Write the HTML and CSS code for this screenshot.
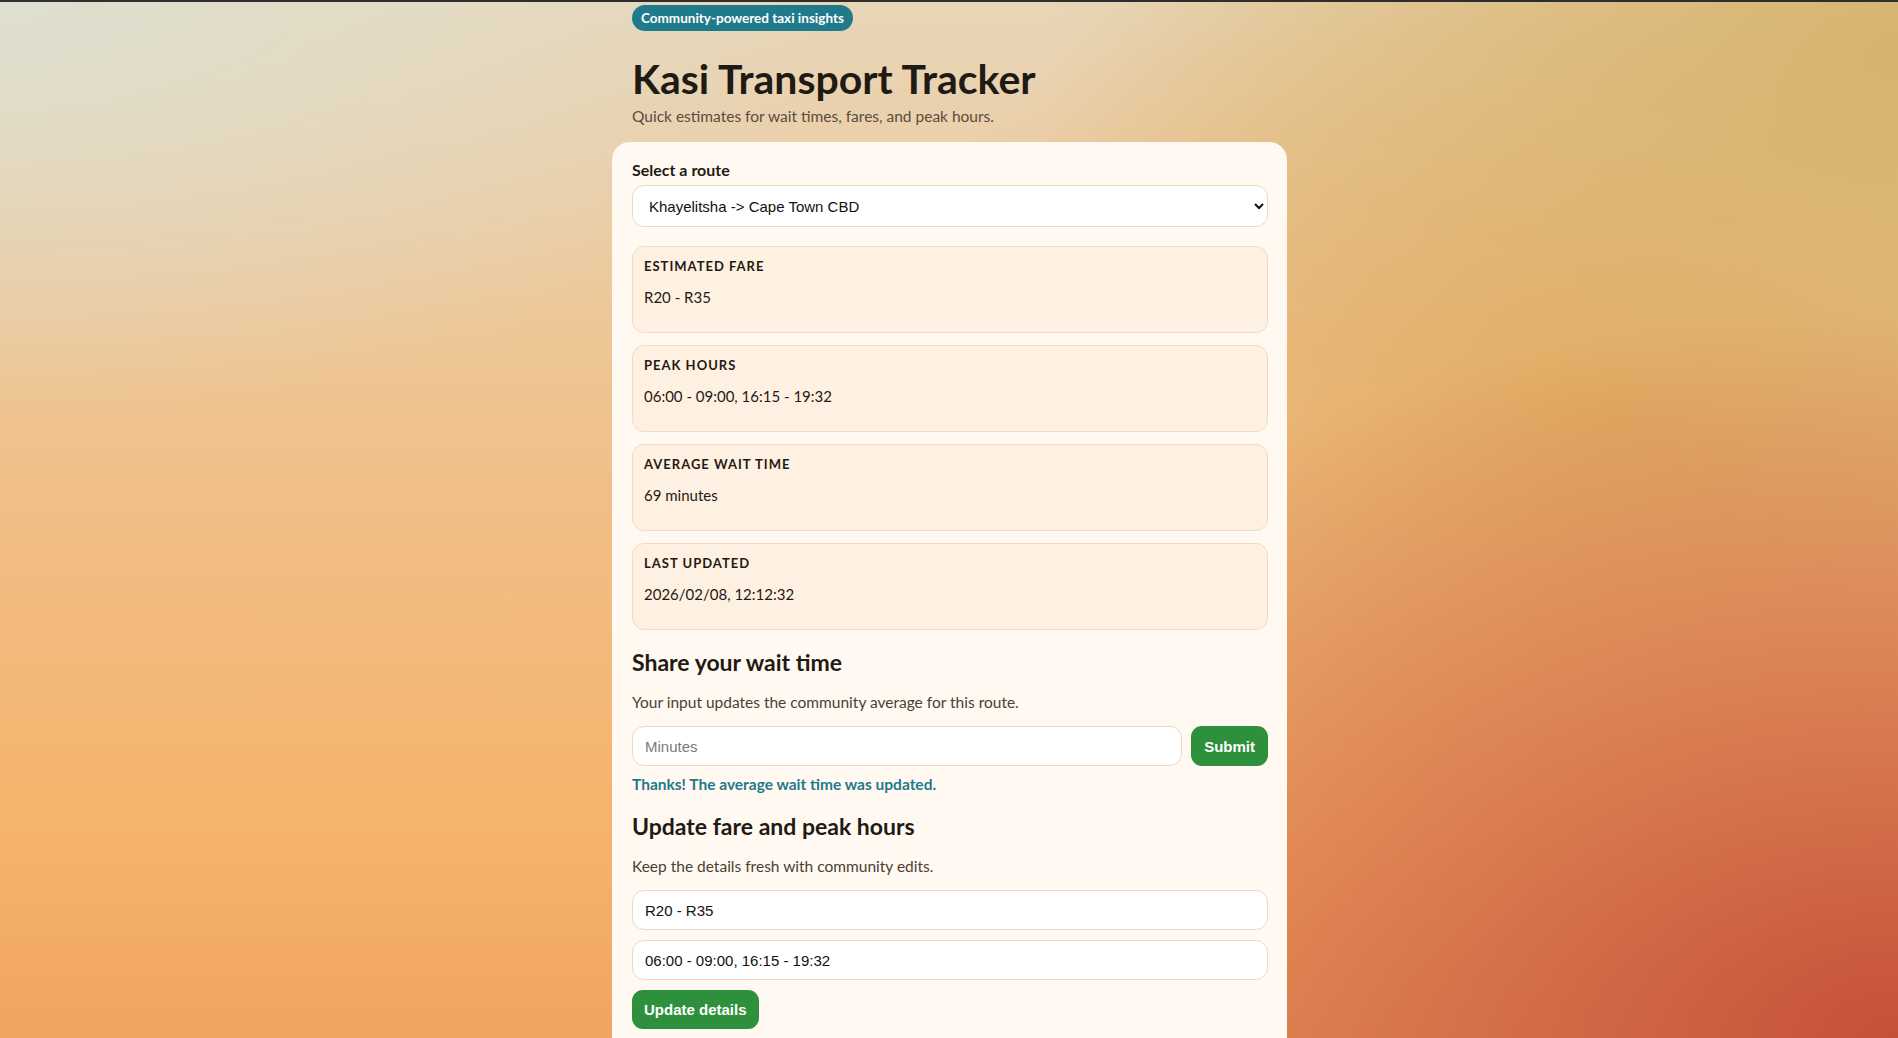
FILE: index.html
```html
<!DOCTYPE html>
<html lang="en">
<head>
<meta charset="utf-8">
<title>Kasi Transport Tracker</title>
<link rel="stylesheet" href="styles.css">
</head>
<body>
<div class="topline"></div>
<main class="page">
  <header class="hero">
    <span class="badge">Community-powered taxi insights</span>
    <h1 class="title">Kasi Transport Tracker</h1>
    <p class="subtitle">Quick estimates for wait times, fares, and peak hours.</p>
  </header>
  <section class="card">
    <label class="field-label" for="route">Select a route</label>
    <select id="route" class="select">
      <option>Khayelitsha -&gt; Cape Town CBD</option>
    </select>
    <div class="stats">
      <div class="stat">
        <h3 class="stat-label">Estimated fare</h3>
        <p class="stat-value">R20 - R35</p>
      </div>
      <div class="stat">
        <h3 class="stat-label">Peak hours</h3>
        <p class="stat-value">06:00 - 09:00, 16:15 - 19:32</p>
      </div>
      <div class="stat">
        <h3 class="stat-label">Average wait time</h3>
        <p class="stat-value">69 minutes</p>
      </div>
      <div class="stat">
        <h3 class="stat-label">Last updated</h3>
        <p class="stat-value">2026/02/08, 12:12:32</p>
      </div>
    </div>
    <h2 class="section-title">Share your wait time</h2>
    <p class="section-desc">Your input updates the community average for this route.</p>
    <div class="row">
      <input class="input grow" type="text" placeholder="Minutes">
      <button class="btn">Submit</button>
    </div>
    <p class="notice">Thanks! The average wait time was updated.</p>
    <h2 class="section-title">Update fare and peak hours</h2>
    <p class="section-desc">Keep the details fresh with community edits.</p>
    <div class="stack">
      <input class="input" type="text" value="R20 - R35">
      <input class="input" type="text" value="06:00 - 09:00, 16:15 - 19:32">
    </div>
    <button class="btn btn-update">Update details</button>
  </section>
</main>
</body>
</html>
```
FILE: styles.css
```css
* { box-sizing: border-box; }
html, body { height: 100%; }
body {
  margin: 0;
  font-family: "Trebuchet MS", Lato, "Noto Sans", sans-serif;
  color: #1f1a14;
  overflow: hidden;
  background:
    radial-gradient(ellipse 45% 40% at 0% 0%, rgba(222,224,210,0.95), rgba(222,224,210,0) 100%),
    radial-gradient(ellipse 60% 70% at 100% 100%, rgba(197,80,58,1), rgba(197,80,58,0) 100%),
    radial-gradient(ellipse 45% 55% at 100% 5%, rgba(214,178,106,0.95), rgba(214,178,106,0) 100%),
    radial-gradient(ellipse 40% 50% at 85% 40%, rgba(228,166,86,0.8), rgba(228,166,86,0) 100%),
    linear-gradient(180deg, #e8d6b8 0%, #f0c08a 45%, #f6b36b 80%, #f0a560 100%);
}
.topline { height: 2px; background: #2e2e2e; }
.page { width: 676px; margin: 0 auto; padding-left: 1px; }
.hero { padding: 3px 20px 0 20px; }
.badge {
  display: inline-block;
  background: #1f7a8c;
  color: #fff;
  font-size: 13.5px;
  font-weight: 700;
  line-height: 16px;
  padding: 5px 9px;
  border-radius: 999px;
}
.title {
  margin: 25px 0 0;
  font-size: 41px;
  line-height: 46px;
  font-weight: 700;
  color: #1f1a14;
}
.subtitle {
  margin: 4px 0 0;
  font-size: 15.5px;
  line-height: 20px;
  color: #5b4c3d;
}
.card {
  margin-top: 16px;
  background: #fff9f1;
  border-radius: 18px;
  padding: 18px 19px 40px 20px;
}
.field-label {
  display: block;
  font-size: 16px;
  font-weight: 700;
  line-height: 20px;
  margin-bottom: 5px;
}
.select, .input {
  display: block;
  width: 100%;
  height: 41px;
  border: 1px solid #ecd9c0;
  border-radius: 12px;
  background: #fff;
  font-family: "Liberation Sans", Arial, sans-serif;
  font-size: 15px;
  color: #111;
  padding: 0 12px;
}
.select { padding-left: 12px; height: 42px; }
.stats {
  display: flex;
  flex-direction: column;
  gap: 12px;
  margin-top: 19px;
}
.stat {
  background: #fef1e1;
  border: 1px solid #f1dcc1;
  border-radius: 12px;
  padding: 10px 11px;
  height: 87px;
}
.stat-label {
  margin: 0;
  font-size: 13px;
  line-height: 18px;
  font-weight: 700;
  letter-spacing: 1px;
  text-transform: uppercase;
}
.stat-value {
  margin: 12px 0 0;
  font-size: 15px;
  line-height: 20px;
}
.section-title {
  margin: 18px 0 0;
  font-size: 23px;
  line-height: 28px;
  font-weight: 700;
}
.section-desc {
  margin: 16px 0 0;
  font-size: 15.5px;
  line-height: 20px;
  color: #4b3f33;
}
.row {
  display: flex;
  gap: 9px;
  margin-top: 14px;
}
.row .input { height: 40px; }
.grow { flex: 1; }
.input::placeholder { color: #7a7a7a; }
.btn {
  background: #2e8f3d;
  color: #fff;
  border: 0;
  border-radius: 11px;
  font-family: "Liberation Sans", Arial, sans-serif;
  font-weight: 700;
  font-size: 15px;
  padding: 0 13px;
  height: 40px;
}
.notice {
  margin: 8px 0 0;
  font-size: 15.5px;
  line-height: 20px;
  font-weight: 700;
  color: #1f7a8c;
}
.stack {
  display: flex;
  flex-direction: column;
  gap: 10px;
  margin-top: 14px;
}
.stack .input { height: 40px; }
.btn-update { margin-top: 10px; height: 39px; padding: 0 12px; }
```
